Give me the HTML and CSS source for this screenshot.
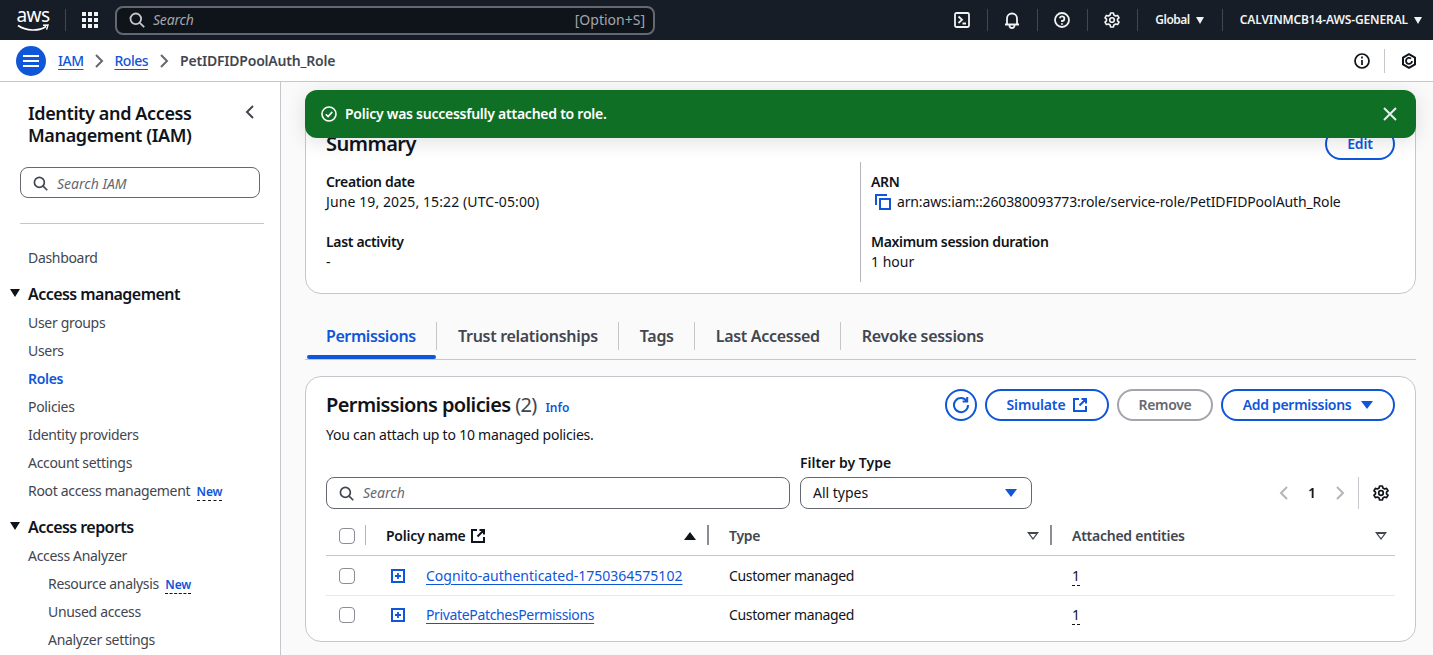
FILE: index.html
```html
<!DOCTYPE html>
<html lang="en">
<head>
<meta charset="utf-8">
<title>PetIDFIDPoolAuth_Role | IAM</title>
<link rel="stylesheet" href="styles.css">
</head>
<body>
<header class="topbar">
  <div class="logo"><span class="logo-text">aws</span>
    <svg class="logo-smile" width="32" height="8" viewBox="0 0 32 8"><path d="M1 1.5C9 7 22 7.5 29 2.5" fill="none" stroke="#fff" stroke-width="1.6"/><path d="M26 1.2L31 1l-1.4 4.6" fill="none" stroke="#fff" stroke-width="1.4"/></svg>
  </div>
  <span class="top-sep first"></span>
  <svg class="grid-icon" width="16" height="16" viewBox="0 0 16 16" fill="#f2f3f3"><rect x="0" y="0" width="4" height="4"/><rect x="6" y="0" width="4" height="4"/><rect x="12" y="0" width="4" height="4"/><rect x="0" y="6" width="4" height="4"/><rect x="6" y="6" width="4" height="4"/><rect x="12" y="6" width="4" height="4"/><rect x="0" y="12" width="4" height="4"/><rect x="6" y="12" width="4" height="4"/><rect x="12" y="12" width="4" height="4"/></svg>
  <div class="top-search">
    <svg width="16" height="16" viewBox="0 0 16 16" fill="none" stroke="#c6c6cd" stroke-width="1.8"><circle cx="6.8" cy="6.8" r="5.3"/><path d="M10.8 10.8l4.4 4.4"/></svg>
    <span class="top-search-text">Search</span>
    <span class="top-search-hint">[Option+S]</span>
  </div>
  <div class="top-right">
    <svg class="ti" width="16" height="16" viewBox="0 0 16 16" fill="none" stroke="#f2f3f3" stroke-width="1.8"><rect x="1" y="1" width="14" height="14" rx="1.5"/><path d="M4.5 4.5L8 7.8 4.5 11M8.5 11.5h3.5"/></svg>
    <span class="top-sep"></span>
    <svg class="ti" width="16" height="17" viewBox="0 0 16 17" fill="none" stroke="#f2f3f3" stroke-width="1.8"><path d="M1 12.5h14M3 12.5V6.5a5 5 0 0 1 10 0v6M5.5 13v.5a2.5 2.5 0 0 0 5 0V13"/></svg>
    <span class="top-sep"></span>
    <svg class="ti" width="16" height="16" viewBox="0 0 16 16" fill="none" stroke="#f2f3f3" stroke-width="1.8"><circle cx="8" cy="8" r="7"/><path d="M5.8 6.2A2.3 2.3 0 1 1 8 9v1"/><path d="M8 11.2v1.6"/></svg>
    <span class="top-sep"></span>
    <svg class="ti" width="16" height="16" viewBox="0 0 16 16" fill="none" stroke="#f2f3f3" stroke-width="1.6"><circle cx="8" cy="8" r="2.3"/><path d="M6.6 1h2.8l.5 2 1.7 1 2-.6 1.4 2.4-1.5 1.4v1.6l1.5 1.4-1.4 2.4-2-.6-1.7 1-.5 2H6.6l-.5-2-1.7-1-2 .6L1 10.2l1.5-1.4V7.2L1 5.8l1.4-2.4 2 .6 1.7-1z" stroke-linejoin="round"/></svg>
    <span class="top-sep"></span>
    <span class="top-menu global">Global <i class="caret"></i></span>
    <span class="top-sep"></span>
    <span class="top-menu acct">CALVINMCB14-AWS-GENERAL <i class="caret"></i></span>
  </div>
</header>

<nav class="crumbbar">
  <span class="menu-btn"><svg width="16" height="12" viewBox="0 0 16 12" stroke="#fff" stroke-width="2"><path d="M0 1h16M0 6h16M0 11h16"/></svg></span>
  <a class="crumb">IAM</a>
  <svg class="chev" width="10" height="14" viewBox="0 0 10 14" fill="none" stroke="#656871" stroke-width="2"><path d="M2 1l6 6-6 6"/></svg>
  <a class="crumb">Roles</a>
  <svg class="chev" width="10" height="14" viewBox="0 0 10 14" fill="none" stroke="#656871" stroke-width="2"><path d="M2 1l6 6-6 6"/></svg>
  <span class="crumb-current">PetIDFIDPoolAuth_Role</span>
  <div class="crumb-tools">
    <svg width="16" height="16" viewBox="0 0 16 16" fill="none" stroke="#0f141a" stroke-width="1.7"><circle cx="8" cy="8" r="7"/><path d="M8 7v5M8 3.6v2" /></svg>
    <span class="crumb-sep"></span>
    <svg width="16" height="16" viewBox="0 0 16 16" fill="none" stroke="#0f141a" stroke-width="2"><path d="M8 1.2l6 3.4v6.8l-6 3.4-6-3.4V4.6z" stroke-linejoin="round"/><path d="M11 8a3 3 0 1 1-1-2.3" stroke-width="1.8"/></svg>
  </div>
</nav>

<div class="shell">
  <aside class="sidebar">
    <div class="side-head">
      <h2 class="side-title">Identity and Access Management (IAM)</h2>
      <svg class="side-close" width="10" height="14" viewBox="0 0 10 14" fill="none" stroke="#424650" stroke-width="2"><path d="M8 1L2 7l6 6"/></svg>
    </div>
    <div class="side-search">
      <svg width="15" height="15" viewBox="0 0 16 16" fill="none" stroke="#424650" stroke-width="1.8"><circle cx="6.8" cy="6.8" r="5.3"/><path d="M10.8 10.8l4.4 4.4"/></svg>
      <span class="ph">Search IAM</span>
    </div>
    <div class="side-div"></div>
    <a class="nav dash">Dashboard</a>
    <div class="nav-group"><i class="tri"></i>Access management</div>
    <a class="nav">User groups</a>
    <a class="nav">Users</a>
    <a class="nav active">Roles</a>
    <a class="nav">Policies</a>
    <a class="nav">Identity providers</a>
    <a class="nav">Account settings</a>
    <a class="nav">Root access management <span class="new">New</span></a>
    <div class="nav-group second"><i class="tri"></i>Access reports</div>
    <a class="nav">Access Analyzer</a>
    <a class="nav sub">Resource analysis <span class="new">New</span></a>
    <a class="nav sub">Unused access</a>
    <a class="nav sub">Analyzer settings</a>
  </aside>

  <main class="main">
    <div class="flash">
      <svg width="16" height="16" viewBox="0 0 16 16" fill="none" stroke="#fff" stroke-width="1.6"><circle cx="8" cy="8" r="7"/><path d="M4.8 8.2l2.3 2.3 4.2-4.6"/></svg>
      <span class="flash-text">Policy was successfully attached to role.</span>
      <svg class="flash-x" width="14" height="14" viewBox="0 0 14 14" stroke="#eaeded" stroke-width="2" fill="none"><path d="M1 1l12 12M13 1L1 13"/></svg>
    </div>

    <section class="card summary">
      <div class="summary-head">
        <h2 class="h-summary">Summary</h2>
        <button class="btn edit">Edit</button>
      </div>
      <div class="summary-cols">
        <div class="col">
          <div class="kv"><div class="k">Creation date</div><div class="v date">June 19, 2025, 15:22 (UTC-05:00)</div></div>
          <div class="kv"><div class="k">Last activity</div><div class="v">-</div></div>
        </div>
        <div class="col right">
          <div class="kv"><div class="k">ARN</div>
            <div class="v arn"><svg width="17" height="17" viewBox="0 0 17 17" fill="none" stroke="#0f56d9" stroke-width="2"><path d="M1 11V1h11"/><rect x="5" y="5" width="10" height="10"/></svg>arn:aws:iam::260380093773:role/service-role/PetIDFIDPoolAuth_Role</div></div>
          <div class="kv"><div class="k">Maximum session duration</div><div class="v">1 hour</div></div>
        </div>
      </div>
    </section>

    <div class="tabs">
      <a class="tab active">Permissions</a>
      <a class="tab">Trust relationships</a>
      <a class="tab">Tags</a>
      <a class="tab">Last Accessed</a>
      <a class="tab last">Revoke sessions</a>
    </div>

    <section class="card perms">
      <div class="perms-head">
        <div class="perms-title">
          <h2 class="h-perms">Permissions policies <span class="count">(2)</span> <a class="info">Info</a></h2>
          <p class="perms-sub">You can attach up to 10 managed policies.</p>
        </div>
        <div class="actions">
          <button class="btn round"><svg width="18" height="18" viewBox="0 0 18 18" fill="none" stroke="#0f56d9" stroke-width="2"><path d="M14.8 5.2A7 7 0 1 0 16 9"/><path d="M15.2 1v4.6h-4.6"/></svg></button>
          <button class="btn sim">Simulate <svg width="14" height="14" viewBox="0 0 14 14" fill="none" stroke="#0f56d9" stroke-width="2"><path d="M6 1H1v12h12V8M8.5 1H13v4.5M13 1L6.5 7.5"/></svg></button>
          <button class="btn off">Remove</button>
          <button class="btn add">Add permissions <i class="caret blue"></i></button>
        </div>
      </div>

      <div class="filters">
        <div class="f-search">
          <svg width="15" height="15" viewBox="0 0 16 16" fill="none" stroke="#424650" stroke-width="1.8"><circle cx="6.8" cy="6.8" r="5.3"/><path d="M10.8 10.8l4.4 4.4"/></svg>
          <span class="ph">Search</span>
        </div>
        <div class="f-type">
          <label class="f-label">Filter by Type</label>
          <div class="f-select">All types <i class="caret blue"></i></div>
        </div>
        <div class="pager">
          <svg width="10" height="14" viewBox="0 0 10 14" fill="none" stroke="#b4b4bb" stroke-width="2"><path d="M8 1L2 7l6 6"/></svg>
          <span class="page">1</span>
          <svg width="10" height="14" viewBox="0 0 10 14" fill="none" stroke="#b4b4bb" stroke-width="2"><path d="M2 1l6 6-6 6"/></svg>
          <span class="pager-sep"></span>
          <svg width="16" height="16" viewBox="0 0 16 16" fill="none" stroke="#0f141a" stroke-width="1.7"><circle cx="8" cy="8" r="2.3"/><path d="M6.6 1h2.8l.5 2 1.7 1 2-.6 1.4 2.4-1.5 1.4v1.6l1.5 1.4-1.4 2.4-2-.6-1.7 1-.5 2H6.6l-.5-2-1.7-1-2 .6L1 10.2l1.5-1.4V7.2L1 5.8l1.4-2.4 2 .6 1.7-1z" stroke-linejoin="round"/></svg>
        </div>
      </div>

      <div class="table">
        <div class="row thead">
          <div class="c c-check"><span class="cb"></span></div>
          <div class="c th dark"><span>Policy name</span><svg class="ext" width="14" height="14" viewBox="0 0 14 14" fill="none" stroke="#0f141a" stroke-width="2"><path d="M6 1H1v12h12V8M8.5 1H13v4.5M13 1L6.5 7.5"/></svg><i class="sort up"></i></div>
          <div class="c th"><span>Type</span><i class="sort down"></i></div>
          <div class="c th last"><span>Attached entities</span><i class="sort down"></i></div>
        </div>
        <div class="row tr">
          <div class="c-check cell"><span class="cb"></span></div>
          <div class="cell name"><svg class="plus" width="14" height="14" viewBox="0 0 14 14" fill="none" stroke="#0f56d9" stroke-width="2"><rect x="1" y="1" width="12" height="12"/><path d="M7 4v6M4 7h6" stroke-width="1.8"/></svg><a class="link">Cognito-authenticated-1750364575102</a></div>
          <div class="cell ind tight">Customer managed</div>
          <div class="cell ind"><span class="dotted">1</span></div>
        </div>
        <div class="row tr end">
          <div class="c-check cell"><span class="cb"></span></div>
          <div class="cell name"><svg class="plus" width="14" height="14" viewBox="0 0 14 14" fill="none" stroke="#0f56d9" stroke-width="2"><rect x="1" y="1" width="12" height="12"/><path d="M7 4v6M4 7h6" stroke-width="1.8"/></svg><a class="link tight">PrivatePatchesPermissions</a></div>
          <div class="cell ind tight">Customer managed</div>
          <div class="cell ind"><span class="dotted">1</span></div>
        </div>
      </div>
    </section>
  </main>
</div>
</body>
</html>
```
FILE: styles.css
```css
* { box-sizing: border-box; }
html, body { margin: 0; height: 100%; overflow: hidden; }
body { font-family: "Noto Sans", "Open Sans", sans-serif; font-size: 14px; line-height: 20px; color: #0f141a; background: #fff; }
h2, p { margin: 0; }
a { cursor: pointer; }
button { font-family: inherit; cursor: pointer; }

.topbar { height: 40px; background: #161d26; color: #f2f3f3; display: flex; align-items: center; }
.logo { width: 32px; margin-left: 17px; height: 30px; display: flex; flex-direction: column; align-items: center; flex: none; }
.logo-text { font-size: 19px; line-height: 20px; letter-spacing: -0.5px; color: #fff; }
.logo-smile { margin-top: -1px; }
.top-sep { width: 1px; height: 22px; background: #424650; flex: none; }
.top-sep.first { margin-left: 16px; }
.grid-icon { margin-left: 16px; flex: none; }
.top-search { margin-left: 17px; width: 540px; height: 29px; border: 2px solid #656871; border-radius: 8px; background: #0f141a; display: flex; align-items: center; padding: 0 8px 0 12px; flex: none; }
.top-search-text { font-style: italic; color: #a4a4ad; margin-left: 8px; font-size: 14px; letter-spacing: -0.2px; }
.top-search-hint { margin-left: auto; color: #a4a4ad; font-size: 14px; }
.top-right { margin-left: auto; display: flex; align-items: center; height: 40px; padding-right: 11px; }
.ti { margin: 0 17px 0 16px; flex: none; }
.top-menu { font-size: 12px; font-weight: 600; color: #f2f3f3; display: flex; align-items: center; gap: 6px; white-space: nowrap; }
.global { padding: 0 18px 0 17px; letter-spacing: -0.5px; }
.acct { padding-left: 17px; letter-spacing: -0.13px; }
.caret { display: inline-block; width: 0; height: 0; border-left: 4.5px solid transparent; border-right: 4.5px solid transparent; border-top: 7px solid #f2f3f3; }
.caret.blue { border-top-color: #0f56d9; border-left-width: 6px; border-right-width: 6px; border-top-width: 8px; }

.crumbbar { height: 42px; border-bottom: 1px solid #c6c6cd; display: flex; align-items: center; padding-left: 16px; background: #fff; }
.menu-btn { width: 30px; height: 30px; border-radius: 50%; background: #0f56d9; display: flex; align-items: center; justify-content: center; flex: none; }
.crumb { color: #0f56d9; font-weight: 500; letter-spacing: -0.5px; text-decoration: underline; text-underline-offset: 3px; margin-left: 12px; }
.chev { margin: 0 0 0 11px; flex: none; }
.crumb + .chev + .crumb { margin-left: 10px; }
.crumb-current { font-weight: 600; color: #424650; margin-left: 11px; letter-spacing: -0.2px; }
.crumb-tools { margin-left: auto; display: flex; align-items: center; padding-right: 16px; }
.crumb-sep { width: 1px; height: 24px; background: #c6c6cd; margin: 0 16px 0 14px; }

.shell { display: flex; height: 573px; }
.sidebar { width: 281px; flex: none; border-right: 1px solid #c6c6cd; padding: 20px 16px 0 0; background: #fff; overflow: hidden; }
.side-head { display: flex; justify-content: space-between; padding: 0 0 0 28px; align-items: flex-start; }
.side-title { font-size: 18px; line-height: 22px; font-weight: 600; width: 190px; letter-spacing: -0.37px; }
.side-close { margin: 3px 9px 0 0; }
.side-search { margin: 21px 4px 0 20px; height: 31px; border: 1px solid #656871; border-radius: 8px; display: flex; align-items: center; padding: 2px 0 0 12px; gap: 9px; }
.ph { font-style: italic; color: #656871; }
.side-div { height: 1px; background: #c6c6cd; margin: 25px 0 0 20px; }
.nav { display: block; color: #424650; height: 28px; line-height: 28px; padding-left: 28px; white-space: nowrap; letter-spacing: -0.32px; }
.nav.dash { margin-top: 20px; }
.nav.active { color: #0f56d9; font-weight: 600; }
.nav.sub { padding-left: 48px; }
.new { color: #0f56d9; font-size: 12px; font-weight: 600; border-bottom: 1px dashed #0f141a; margin-left: 3px; line-height: 16px; display: inline-block; letter-spacing: -0.1px; }
.nav-group { font-size: 16px; font-weight: 600; line-height: 22px; padding-left: 28px; position: relative; margin: 11px 0 4px; white-space: nowrap; letter-spacing: -0.55px; }
.nav-group.second { margin-top: 11px; margin-bottom: 4px; }
.tri { position: absolute; left: 10px; top: 6px; width: 0; height: 0; border-left: 5px solid transparent; border-right: 5px solid transparent; border-top: 8px solid #0f141a; }

.main { flex: 1; background: #fafafa; padding: 20px 17px 0 24px; position: relative; overflow: hidden; }
.flash { position: absolute; left: 24px; top: 8px; width: 1111px; height: 48px; background: #0f7025; border-radius: 12px; color: #fff; display: flex; align-items: center; padding: 0 19px 0 16px; gap: 8px; box-shadow: 0 4px 20px rgba(0,7,22,.12); z-index: 2; }
.flash-text { font-weight: 600; letter-spacing: -0.25px; }
.flash-x { margin-left: auto; }

.card { background: #fff; border: 1px solid #c6c6cd; border-radius: 16px; }
.summary { height: 192px; padding: 26px 20px 0; }
.summary-head { display: flex; justify-content: space-between; align-items: flex-start; height: 33px; }
.h-summary { font-size: 20px; line-height: 30px; font-weight: 600; letter-spacing: -0.5px; }
.btn { height: 32px; border: 2px solid #0f56d9; border-radius: 16px; background: #fff; color: #0f56d9; font-weight: 600; font-size: 14px; line-height: 20px; padding: 0 20px; display: inline-flex; align-items: center; justify-content: center; white-space: nowrap; flex: none; letter-spacing: -0.15px; }
.edit { width: 70px; margin-top: -1px; padding: 0; }
.summary-cols { display: grid; grid-template-columns: 534px 1fr; }
.col { height: 120px; padding-top: 10px; display: flex; flex-direction: column; gap: 20px; }
.col.right { border-left: 1px solid #b4b4bb; padding-left: 10px; }
.kv { height: 40px; }
.k { font-weight: 600; height: 20px; letter-spacing: -0.33px; }
.v { color: #0f141a; }
.date { letter-spacing: 0.1px; }
.arn { display: flex; align-items: center; gap: 5px; margin-left: 4px; letter-spacing: -0.14px; }

.tabs { display: flex; height: 66px; margin-top: 0; padding-top: 28px; border-bottom: 1px solid #c6c6cd; }
.tab { position: relative; font-size: 16px; font-weight: 600; color: #424650; height: 28px; line-height: 28px; padding: 0 20px 0 21px; border-right: 1px solid #c6c6cd; white-space: nowrap; letter-spacing: -0.3px; }
.tab.active { color: #0f56d9; width: 132px; margin-left: 0; padding-left: 21px; letter-spacing: -0.42px; }
.tab.active::after { content: ""; position: absolute; left: 2px; right: 0; top: 33px; height: 4px; background: #0f56d9; border-radius: 2px; }
.tab.last { border-right: 0; }

.perms { margin-top: 16px; height: 266px; padding: 12px 20px 0; }
.perms-head { display: flex; justify-content: space-between; align-items: flex-start; height: 68px; }
.h-perms { font-size: 20px; line-height: 32px; font-weight: 600; letter-spacing: -0.6px; }
.count { font-weight: 400; color: #424650; }
.info { font-size: 12px; color: #0f56d9; font-weight: 600; margin-left: 4px; letter-spacing: 0; }
.perms-sub { color: #0f141a; line-height: 20px; margin-top: 1px; letter-spacing: -0.22px; }
.actions { display: flex; gap: 8px; }
.round { width: 32px; padding: 0; border-radius: 50%; }
.sim { width: 124px; padding: 0; gap: 8px; }
.off { width: 96px; padding: 0; color: #656871; border-color: #a4a4ad; letter-spacing: -0.3px; }
.add { width: 174px; padding: 0; gap: 10px; letter-spacing: -0.3px; }

.filters { display: flex; align-items: flex-end; height: 52px; }
.f-search { width: 464px; height: 32px; border: 1px solid #656871; border-radius: 8px; display: flex; align-items: center; padding-left: 12px; gap: 9px; background: #fff; }
.f-type { margin-left: 10px; width: 232px; }
.f-label { display: block; font-weight: 600; height: 24px; line-height: 20px; }
.f-select { height: 32px; border: 1px solid #656871; border-radius: 8px; display: flex; align-items: center; justify-content: space-between; padding: 0 14px 0 12px; }
.pager { margin-left: auto; margin-right: 6px; display: flex; align-items: center; height: 32px; }
.page { font-weight: 600; margin: 0 19px; }
.pager-sep { width: 1px; height: 32px; background: #c6c6cd; margin: 0 14px 0 13px; }

.row { display: grid; grid-template-columns: 40px 343px 343px 1fr; }
.thead { height: 47px; border-bottom: 1px solid #c6c6cd; align-items: center; padding-top: 8px; }
.c { display: flex; align-items: center; height: 22px; }
.th { font-weight: 600; color: #424650; padding: 0 0 0 20px; position: relative; letter-spacing: -0.25px; }
.th.dark { color: #0f141a; }
.c-check { display: flex; align-items: center; padding-left: 13px; }
.thead .c-check { position: relative; }
.thead .c-check::after, .thead .th:not(.last)::after { content: ""; position: absolute; right: 0; top: 0; width: 2px; height: 20px; background: #8c8c94; }
.thead .c-check::after { width: 1px; background: #b4b4bb; }
.ext { margin-left: 5px; }
.cb { width: 16px; height: 16px; border: 1px solid #8c8c94; border-radius: 4px; background: #fff; display: block; }
.sort { position: absolute; width: 0; height: 0; right: 13px; top: 7px; }
.sort.up { border-left: 6px solid transparent; border-right: 6px solid transparent; border-bottom: 8px solid #0f141a; }
.sort.down { border-left: 6px solid transparent; border-right: 6px solid transparent; border-top: 8px solid #424650; }
.sort.down::after { content: ""; position: absolute; left: -3px; top: -6.5px; border-left: 3px solid transparent; border-right: 3px solid transparent; border-top: 4px solid #fff; }
.th.last .sort { right: 8px; }
.tr { height: 40px; border-bottom: 1px solid #e8e8ea; align-items: center; }
.tr.end { border-bottom: 0; height: 38px; }
.name { display: flex; align-items: center; padding-left: 25px; }
.plus { flex: none; }
.link { color: #0f56d9; text-decoration: underline; text-underline-offset: 3px; margin-left: 21px; }
.ind { padding-left: 20px; }
.tight { letter-spacing: -0.35px; }
.dotted { border-bottom: 1px dashed #0f141a; }
```
